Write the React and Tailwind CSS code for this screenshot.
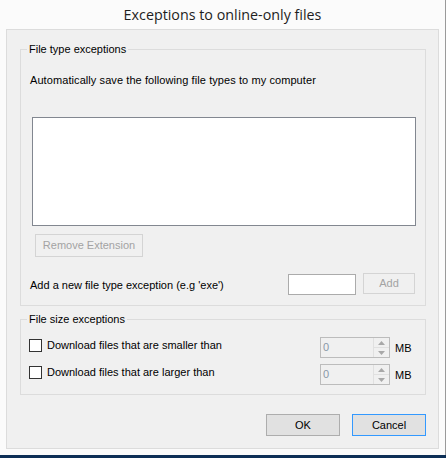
import React from "react";

function GroupBox({ title, className, children }) {
  return (
    <div className={`relative border border-[#dcdcdc] ${className}`}>
      <span className="absolute -top-[8px] left-[6px] bg-[#f0f0f0] px-[2px] leading-[14px]">{title}</span>
      {children}
    </div>
  );
}

function Spinner() {
  return (
    <div className="flex h-[21px] w-[70px] border border-[#bcbcbc] bg-[#f0f0f0]">
      <div className="flex-1 pl-[2px] leading-[19px] text-[#8a97a8]">0</div>
      <div className="flex w-[16px] flex-col border-l border-[#e0e0e0]">
        <div className="flex flex-1 items-center justify-center">
          <svg width="7" height="4" viewBox="0 0 7 4"><path d="M0 4 L3.5 0 L7 4 Z" fill="#a8a8a8" /></svg>
        </div>
        <div className="h-px bg-[#e0e0e0]" />
        <div className="flex flex-1 items-center justify-center">
          <svg width="7" height="4" viewBox="0 0 7 4"><path d="M0 0 L3.5 4 L7 0 Z" fill="#a8a8a8" /></svg>
        </div>
      </div>
    </div>
  );
}

function SizeRow({ label }) {
  return (
    <div className="flex h-[21px] items-start">
      <div className="ml-[8px] mt-[2px] h-[13px] w-[13px] border border-[#333] bg-white" />
      <span className="ml-[5px] flex-1 leading-[17px]">{label}</span>
      <Spinner />
      <span className="ml-[5px] mr-[12px] mt-[4px] w-[18px] leading-[14px]">MB</span>
    </div>
  );
}

export default function App() {
  return (
    <div
      className="flex h-[458px] w-[446px] flex-col bg-[#fbfbfb] text-[11px] text-black"
      style={{ fontFamily: '"Liberation Sans", Arial, sans-serif' }}
    >
      <div className="flex h-[455px] flex-col border-r border-[#9a9a9a]">
        {/* title */}
        <div
          className="flex h-[29px] items-center justify-center text-[14.3px] text-[#1e1e1e]"
          style={{ fontFamily: '"Open Sans", "Noto Sans", sans-serif' }}
        >
          Exceptions to online-only files
        </div>

        {/* panel */}
        <div className="ml-[6px] flex h-[420px] w-[433px] flex-col border border-[#dcdcdc] bg-[#f0f0f0]">
          {/* File type exceptions */}
          <GroupBox title="File type exceptions" className="ml-[13px] mt-[19px] h-[257px] w-[406px]">
            <div className="flex flex-col">
              <p className="ml-[9px] mt-[24px] leading-[13px] tracking-[0.08px]">Automatically save the following file types to my computer</p>
              <div className="ml-[11px] mt-[30px] h-[109px] w-[384px] border border-[#828790] bg-white" />
              <button className="ml-[14px] mt-[8px] h-[23px] w-[108px] border border-[#d4d4d4] bg-[#f0f0f0] text-[#a3a3a3]">
                Remove Extension
              </button>
              <div className="mt-[15px] flex items-center">
                <span className="ml-[9px] mt-[3px] flex-1">Add a new file type exception (e.g 'exe')</span>
                <div className="mt-[2px] h-[21px] w-[68px] border border-[#ababab] bg-white" />
                <button className="ml-[7px] mr-[10px] h-[21px] w-[52px] border border-[#d4d4d4] bg-[#f0f0f0] text-[#a3a3a3]">
                  Add
                </button>
              </div>
            </div>
          </GroupBox>

          {/* File size exceptions */}
          <GroupBox title="File size exceptions" className="ml-[13px] mt-[13px] h-[76px] w-[406px]">
            <div className="mt-[17px] flex flex-col gap-[6px]">
              <SizeRow label="Download files that are smaller than" />
              <SizeRow label="Download files that are larger than" />
            </div>
          </GroupBox>

          {/* buttons */}
          <div className="mt-[19px] flex justify-end gap-[12px] pr-[12px]">
            <button className="h-[22px] w-[74px] border border-[#adadad] bg-[#e1e1e1]">OK</button>
            <button className="h-[22px] w-[74px] border border-[#3399ff] bg-[#e1e1e1]">Cancel</button>
          </div>
        </div>
      </div>
      <div className="h-[3px] bg-[#0d2f56]" />
    </div>
  );
}
